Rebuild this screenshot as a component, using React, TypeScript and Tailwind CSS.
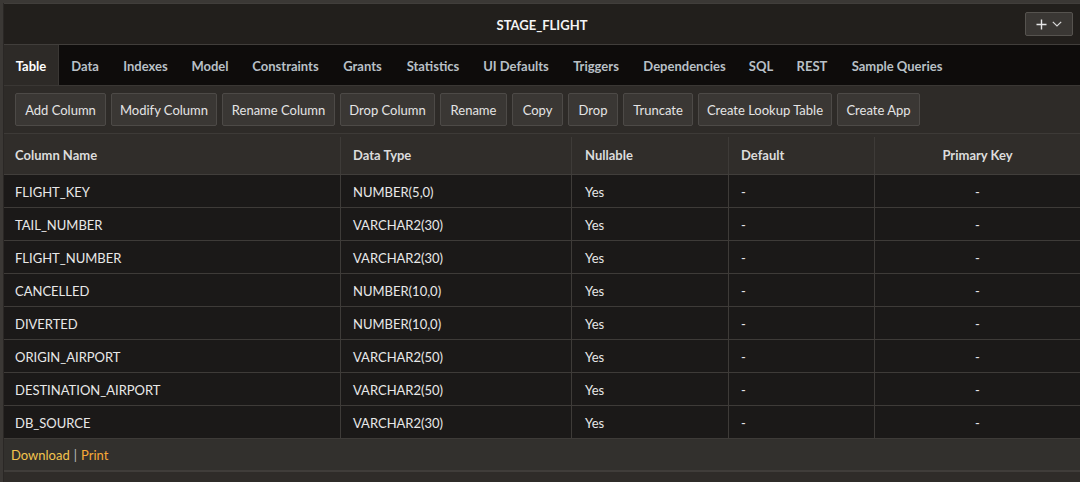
import React from "react";

const tabs: { label: string; w: string; active?: boolean }[] = [
  { label: "Table", w: "w-[55px]", active: true },
  { label: "Data", w: "w-[52px]" },
  { label: "Indexes", w: "w-[69px]" },
  { label: "Model", w: "w-[60px]" },
  { label: "Constraints", w: "w-[91px]" },
  { label: "Grants", w: "w-[63px]" },
  { label: "Statistics", w: "w-[78px]" },
  { label: "UI Defaults", w: "w-[88px]" },
  { label: "Triggers", w: "w-[72px]" },
  { label: "Dependencies", w: "w-[105px]" },
  { label: "SQL", w: "w-[48px]" },
  { label: "REST", w: "w-[54px]" },
  { label: "Sample Queries", w: "w-[116px]" },
];

const buttons: { label: string; w: string }[] = [
  { label: "Add Column", w: "w-[91px]" },
  { label: "Modify Column", w: "w-[106px]" },
  { label: "Rename Column", w: "w-[113px]" },
  { label: "Drop Column", w: "w-[95px]" },
  { label: "Rename", w: "w-[67px]" },
  { label: "Copy", w: "w-[51px]" },
  { label: "Drop", w: "w-[50px]" },
  { label: "Truncate", w: "w-[70px]" },
  { label: "Create Lookup Table", w: "w-[134px]" },
  { label: "Create App", w: "w-[83px]" },
];

const rows: [string, string][] = [
  ["FLIGHT_KEY", "NUMBER(5,0)"],
  ["TAIL_NUMBER", "VARCHAR2(30)"],
  ["FLIGHT_NUMBER", "VARCHAR2(30)"],
  ["CANCELLED", "NUMBER(10,0)"],
  ["DIVERTED", "NUMBER(10,0)"],
  ["ORIGIN_AIRPORT", "VARCHAR2(50)"],
  ["DESTINATION_AIRPORT", "VARCHAR2(50)"],
  ["DB_SOURCE", "VARCHAR2(30)"],
];

const font = { fontFamily: "Lato, 'Open Sans', sans-serif" };

export default function App() {
  return (
    <div
      className="w-[1080px] h-[482px] overflow-hidden bg-[#3b3835] pl-[3px] pt-[3px] text-[13px]"
      style={font}
    >
      <div className="flex flex-col h-full border-l border-[#2a2725] bg-[#2f2c29]">
        {/* Header */}
        <div className="h-[42px] shrink-0 flex items-center justify-center relative bg-[#221f1c] border-t border-b border-[#413e3b]">
          <span className="font-bold text-[#f4f4f4] text-[13px] pt-[3px]">STAGE_FLIGHT</span>
          <button className="absolute right-[7px] top-[8px] w-[48px] h-[24px] flex items-center justify-center gap-[5px] bg-[#3a3734] border border-[#56534f] rounded-[2px]">
            <svg width="11" height="11" viewBox="0 0 11 11">
              <path d="M5.5 0.5v10M0.5 5.5h10" stroke="#e6e6e6" strokeWidth="1.4" />
            </svg>
            <svg width="10" height="6" viewBox="0 0 10 6">
              <path d="M0.8 0.8L5 5L9.2 0.8" stroke="#d8d8d8" strokeWidth="1.2" fill="none" />
            </svg>
          </button>
        </div>
        {/* Tabs */}
        <div className="h-[41px] shrink-0 flex bg-[#0e0c0b] border-b border-[#3a3734]">
          {tabs.map((t) => (
            <div
              key={t.label}
              className={`${t.w} h-full flex items-center justify-center pt-[3px] font-bold text-[13px] whitespace-nowrap ${
                t.active ? "bg-[#2d2a27] text-[#ffffff] border-r border-[#3a3734]" : "text-[#b9c0c6]"
              }`}
            >
              {t.label}
            </div>
          ))}
        </div>
        {/* Toolbar */}
        <div className="h-[48px] shrink-0 flex items-center gap-[5px] px-[11px] bg-[#2e2b28] border-b border-[#3d3a37]">
          {buttons.map((b) => (
            <button
              key={b.label}
              className={`${b.w} h-[33px] flex items-center justify-center pt-[2px] whitespace-nowrap bg-[#3a3734] border border-[#4d4a47] rounded-[2px] text-[#e4e4e4] text-[13px]`}
            >
              {b.label}
            </button>
          ))}
        </div>
        {/* Table */}
        <div className="flex flex-col shrink-0">
          <div className="flex h-[41px] pt-[3px] bg-[#302d2a] border-b border-[#413e3b] font-bold text-[#dcdcdc]">
            <div className="w-[337px] flex items-center pl-[11px] border-r border-[#3e3b38]">Column Name</div>
            <div className="w-[231px] flex items-center pl-[12px] border-r border-[#3e3b38]">Data Type</div>
            <div className="w-[157px] flex items-center pl-[13px] border-r border-[#3e3b38]">Nullable</div>
            <div className="w-[146px] flex items-center pl-[12px] border-r border-[#3e3b38]">Default</div>
            <div className="flex-1 flex items-center justify-center">Primary Key</div>
          </div>
          {rows.map(([name, type]) => (
            <div key={name} className="flex h-[33px] bg-[#1b1918] border-b border-[#3e3b38] text-[#e8e8e8]">
              <div className="w-[337px] flex items-center pt-[3px] pl-[11px] border-r border-[#3e3b38]">{name}</div>
              <div className="w-[231px] flex items-center pt-[3px] pl-[12px] border-r border-[#3e3b38]">{type}</div>
              <div className="w-[157px] flex items-center pt-[3px] pl-[13px] border-r border-[#3e3b38]">Yes</div>
              <div className="w-[146px] flex items-center pt-[3px] pl-[12px] border-r border-[#3e3b38]">-</div>
              <div className="flex-1 flex items-center justify-center pt-[3px]">-</div>
            </div>
          ))}
        </div>
        {/* Footer */}
        <div className="h-[33px] shrink-0 flex items-center pl-[7px] pt-[2px] bg-[#32302d] border-b-[2px] border-[#403d3a]">
          <span className="text-[#f2c44e]">Download</span>
          <span className="text-[#bdbdbd] mx-[4px]">|</span>
          <span className="text-[#f7a836]">Print</span>
        </div>
        <div className="flex-1 bg-[#2f2c29]" />
      </div>
    </div>
  );
}
